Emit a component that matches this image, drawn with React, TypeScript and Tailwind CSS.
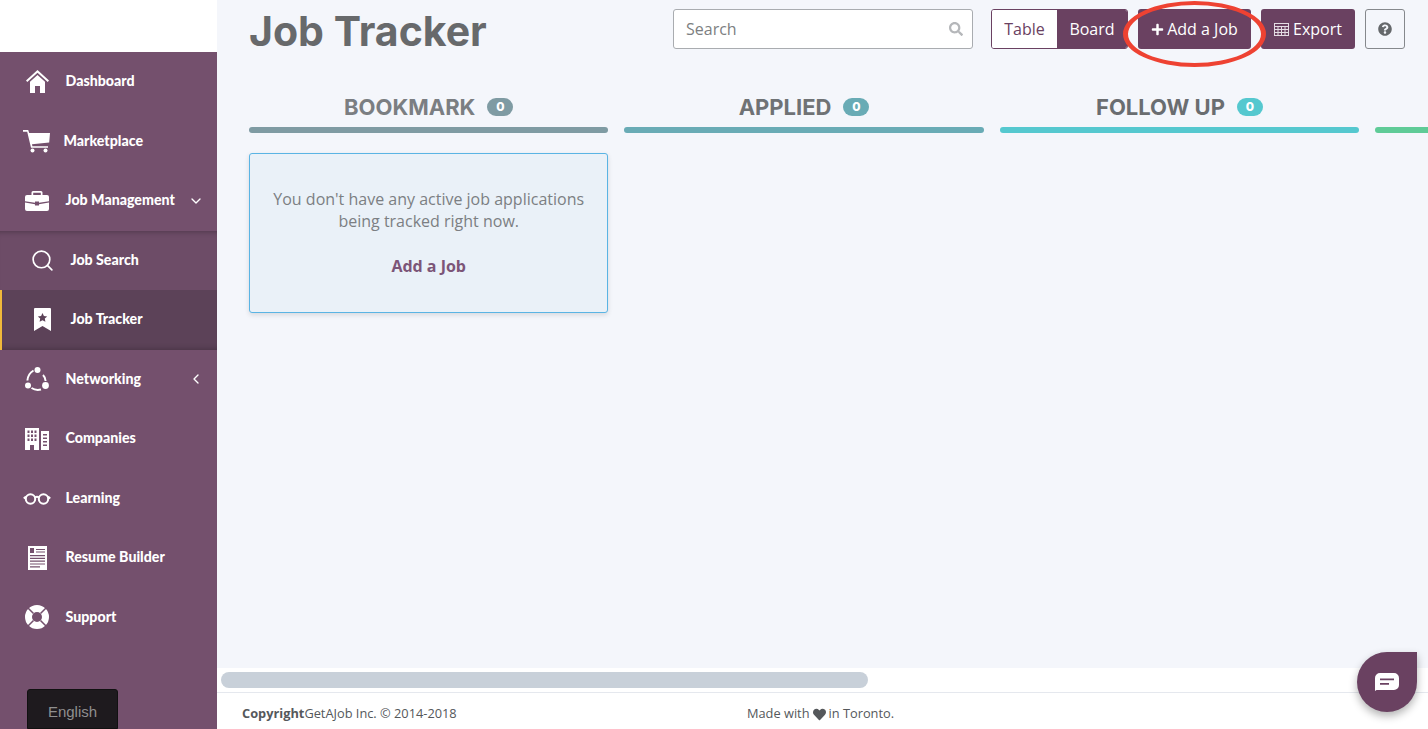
import React from 'react';
import { FaSearch, FaPlus, FaQuestionCircle, FaHeart } from 'react-icons/fa';
import { LuChevronDown, LuChevronLeft, LuSearch } from 'react-icons/lu';

const HomeIcon = () => (
  <svg width="23" height="23" viewBox="0 0 23 23" fill="white">
    <path d="M11.500 0L23 10.500l-1.300 1.500L11.500 2.800 1.300 12 0 10.500z" />
    <path d="M11.500 5L19 11.800V23h-5v-7H9v7H4V11.800z" />
  </svg>
);

const CartIcon = () => (
  <svg width="28" height="23" viewBox="0 0 28 23" fill="white">
    <path d="M0 0h5.200l1 3H27l-.8 9.600L9 14.200l.4 2H25v1.600H8L4.200 1.700H0z" />
    <circle cx="9.500" cy="20.500" r="2" />
    <circle cx="22.500" cy="20.500" r="2" />
  </svg>
);

const BriefcaseIcon = () => (
  <svg width="24" height="20" viewBox="0 0 24 20" fill="white">
    <path d="M8 0h8a1.500 1.500 0 0 1 1.500 1.500V4H22a2 2 0 0 1 2 2v4.200l-10 1.600v-1.300h-4v1.300L0 10.200V6a2 2 0 0 1 2-2h4.500V1.500A1.500 1.500 0 0 1 8 0zm.2 1.700V4h7.600V1.700z" />
    <path d="M0 11.600l10 1.600v1.300h4v-1.300l10-1.600V18a2 2 0 0 1-2 2H2a2 2 0 0 1-2-2z" />
  </svg>
);

const BookmarkIcon = () => (
  <svg width="17" height="23" viewBox="0 0 17 23" fill="white">
    <path fillRule="evenodd" d="M1 0h15a1 1 0 0 1 1 1v22l-8.500-5L0 23V1a1 1 0 0 1 1-1zm7.500 5l1.400 3 3.300.4-2.400 2.200.6 3.200-2.900-1.600-2.900 1.600.6-3.200-2.400-2.200 3.300-.4z" />
  </svg>
);

const NetworkIcon = () => (
  <svg width="24" height="24" viewBox="0 0 24 24" fill="none" stroke="white" strokeWidth="2">
    <circle cx="12.500" cy="3" r="3" fill="white" stroke="none" />
    <circle cx="3" cy="18.500" r="3" fill="white" stroke="none" />
    <circle cx="20.500" cy="18.500" r="3.400" fill="white" stroke="none" />
    <path d="M8.500 3.500C5 5.500 2.800 9 2.400 13.500M6.500 21c3 2 6 2.400 9.500 1.500M18 8c1.600 1.500 2.400 3.500 2.600 6" />
  </svg>
);

const CompaniesIcon = () => (
  <svg width="24" height="22" viewBox="0 0 24 22" fill="white">
    <path fillRule="evenodd" d="M0 0h14v22H9v-5H5v5H0zm2.500 2.500v2.500h2V2.500zm3.500 0v2.500h2V2.500zm3.500 0v2.500h2V2.500zM2.500 6.500v2.500h2V6.500zm3.500 0v2.500h2V6.500zm3.500 0v2.500h2V6.500zM2.500 10.500v2.500h2v-2.500zm3.500 0v2.500h2v-2.500zm3.500 0v2.500h2v-2.500z" />
    <path fillRule="evenodd" d="M16 3h8v19h-8zm2 3v1.500h4V6zm0 3.500V11h4V9.500zm0 3.500v1.500h4V13zm0 3.500V18h4v-1.500z" />
  </svg>
);

const GlassesIcon = () => (
  <svg width="28" height="13" viewBox="0 0 28 13" fill="none" stroke="white" strokeWidth="2">
    <circle cx="7.500" cy="7" r="4.700" />
    <circle cx="20.500" cy="7" r="4.700" />
    <path d="M12 5.500c1.200-1 2.800-1 4 0M3 4.500L.8 6.500M25 4.500l2.200 2" />
  </svg>
);

const ResumeIcon = () => (
  <svg width="19" height="24" viewBox="0 0 19 24" fill="white">
    <path fillRule="evenodd" d="M0 0h19v24H0zm2 2v5h4V2zm6 1v1h9V3zm0 2.500v1h9v-1zM2 9v1.200h15V9zm0 2.800V13h15v-1.200zm0 2.800v1.200h15v-1.200zm0 2.800v1.200h15v-1.200zm0 2.800v1.200h10v-1.200z" />
  </svg>
);

const LifeRingIcon = () => (
  <svg width="24" height="24" viewBox="0 0 24 24" fill="none">
    <circle cx="12" cy="12" r="8.500" stroke="white" strokeWidth="7" />
    <path d="M3 3l5.500 5.500M21 3l-5.500 5.500M3 21l5.500-5.500M21 21l-5.500-5.500" stroke="#74506d" strokeWidth="1.500" />
  </svg>
);

const GridIcon = () => (
  <svg width="15" height="13" viewBox="0 0 15 13" fill="none" stroke="#e4dce3" strokeWidth="1">
    <rect x="0.500" y="0.500" width="14" height="12" />
    <path d="M0 3.500h15M0 6.500h15M0 9.500h15M4 3v10M7.500 3v10M11 3v10" />
  </svg>
);

const ChatIcon = () => (
  <svg width="24" height="18" viewBox="0 0 24 18" fill="white">
    <path fillRule="evenodd" d="M5 0h14a5 5 0 0 1 5 5v7a5 5 0 0 1-5 5H1.500L0 18V5a5 5 0 0 1 5-5zm0 5.500v1.800h14V5.500zm0 4.500v1.800h9V10z" />
  </svg>
);

const navItems = [
  { label: 'Dashboard', icon: <HomeIcon /> },
  { label: 'Marketplace', icon: <CartIcon />, textClass: 'ml-[12.5px]' },
  { label: 'Job Management', icon: <BriefcaseIcon />, chevron: 'down' },
  { label: 'Job Search', icon: <LuSearch className="text-[25px] text-white" strokeWidth={1.6} />, sub: true },
  { label: 'Job Tracker', icon: <BookmarkIcon />, sub: true, active: true },
  { label: 'Networking', icon: <NetworkIcon />, chevron: 'left' },
  { label: 'Companies', icon: <CompaniesIcon /> },
  { label: 'Learning', icon: <GlassesIcon /> },
  { label: 'Resume Builder', icon: <ResumeIcon /> },
  { label: 'Support', icon: <LifeRingIcon /> },
];

const columns = [
  { title: 'BOOKMARK', text: 'text-[#7b7e82]', bar: 'bg-[#7f9ba3]', pill: 'bg-[#7f9ba3]' },
  { title: 'APPLIED', text: 'text-[#6f7275]', bar: 'bg-[#69abb5]', pill: 'bg-[#69abb5]' },
  { title: 'FOLLOW UP', text: 'text-[#6a6d70]', bar: 'bg-[#55c8cf]', pill: 'bg-[#55c8cf]' },
  { title: '', text: '', bar: 'bg-[#5fcb97]', pill: '' },
];

const Sidebar = () => (
  <aside className="w-[217px] shrink-0 flex flex-col font-['Lato',sans-serif]">
    <div className="h-[52px] bg-white shrink-0"></div>
    <div className="flex-1 bg-[#74506d] flex flex-col overflow-hidden">
      {navItems.map((item) => {
        let rowClass = 'pl-[23px]';
        if (item.sub) rowClass = 'pl-[28px] bg-[#6d4c67] shadow-[inset_0_6px_6px_-6px_rgba(0,0,0,0.35)]';
        if (item.active) rowClass = 'pl-[26px] bg-[#5c4258] border-l-2 border-[#f0b93a] shadow-[inset_0_-6px_6px_-6px_rgba(0,0,0,0.3)]';
        return (
          <div key={item.label} className={`h-[59.5px] shrink-0 flex items-center text-white ${rowClass}`}>
            <span className="w-[28px] flex justify-center shrink-0">{item.icon}</span>
            <span className={`text-[14.2px] font-black pb-[2px] ${item.textClass || 'ml-[14.5px]'}`}>{item.label}</span>
            {item.chevron === 'down' && <LuChevronDown className="ml-auto mr-[13px] text-[16px]" />}
            {item.chevron === 'left' && <LuChevronLeft className="ml-auto mr-[13px] text-[16px]" />}
          </div>
        );
      })}
      <div className="mt-auto ml-[27px] w-[91px] h-[40px] pt-[6px] shrink-0 bg-[#1e1a1e] border border-[#111] rounded-t-[3px] flex items-center justify-center text-[15px] text-[#8f8f8f] font-['Liberation_Sans',sans-serif]">
        English
      </div>
    </div>
  </aside>
);

const Toolbar = () => (
  <div className="relative flex items-center font-['Open_Sans',sans-serif] text-[16px]">
    <div className="w-[300px] h-[40px] bg-white border border-[#a9acb0] rounded-[3px] flex items-center justify-between pl-[12px] pr-[9px] text-[#7d7f82]">
      <span>Search</span>
      <FaSearch className="text-[14px] text-[#b5b7ba]" />
    </div>
    <div className="ml-[18px] h-[40px] flex rounded-[3px] overflow-hidden border border-[#6a4161]">
      <span className="w-[65px] bg-white text-[#6a4161] flex items-center justify-center">Table</span>
      <span className="w-[70px] bg-[#6a4161] text-white flex items-center justify-center">Board</span>
    </div>
    <div className="ml-[10px] w-[113px] h-[40px] bg-[#6a4161] text-white rounded-[3px] flex items-center justify-center gap-[3px]">
      <FaPlus className="text-[13px]" />
      <span>Add a Job</span>
    </div>
    <div className="ml-[10px] w-[94px] h-[40px] bg-[#6a4161] text-white rounded-[3px] flex items-center justify-center gap-[4px]">
      <GridIcon />
      <span>Export</span>
    </div>
    <div className="ml-[10px] w-[40px] h-[40px] border border-[#85888c] rounded-[3px] flex items-center justify-center">
      <FaQuestionCircle className="text-[14px] text-[#65686b]" />
    </div>
    {/* hand drawn annotation round the button */}
    <div className="absolute left-[450px] top-[-8px] w-[143px] h-[66px] rounded-[50%] border-x-[5px] border-y-[4px] border-[#ee4232] pointer-events-none"></div>
  </div>
);

const Board = () => (
  <div className="flex-1 overflow-hidden pl-[32px] pt-[39px]">
    <div className="flex gap-[16px] w-[1500px]">
      {columns.map((col, i) => (
        <div key={col.bar} className="w-[359.4px] shrink-0">
          <div className={`h-[30px] flex items-center justify-center gap-[12px] font-['Inter',sans-serif] text-[22px] font-bold ${col.text}`}>
            <span>{col.title}</span>
            {col.title && (
              <span className={`w-[26px] h-[18px] rounded-[9px] flex items-center justify-center text-white text-[12px] font-extrabold ${col.pill}`}>0</span>
            )}
          </div>
          <div className={`mt-[5px] h-[6px] rounded-full ${col.bar}`}></div>
          {i === 0 && (
            <div className="mt-[20px] h-[160px] bg-[#eaf1f8] border border-[#5ab4e4] rounded-[3px] shadow-[0_2px_5px_rgba(0,0,0,0.12)] flex flex-col items-center pt-[34px] font-['Open_Sans',sans-serif] text-[16px] leading-[22px] text-[#7c7f83] text-center">
              <p>You don't have any active job applications<br />being tracked right now.</p>
              <p className="mt-[23px] font-bold text-[#7c5578]">Add a Job</p>
            </div>
          )}
        </div>
      ))}
    </div>
  </div>
);

const Footer = () => (
  <div className="bg-white h-[61px] shrink-0">
    <div className="h-[25px] pt-[4px] pl-[4px] border-b border-[#e5e8ee]">
      <div className="w-[647px] h-[16px] rounded-full bg-[#c8d0d9]"></div>
    </div>
    <div className="flex items-center h-[36px] pt-[6px] pl-[25px] font-['Open_Sans',sans-serif] text-[12.8px] text-[#55585b]">
      <span className="w-[505px]"><strong className="font-bold">Copyright</strong>GetAJob Inc. © 2014-2018</span>
      <span className="flex items-center gap-[3px]">Made with <FaHeart className="text-[13px]" /> in Toronto.</span>
    </div>
  </div>
);

export default function App() {
  return (
    <div className="relative flex h-[729px] w-[1428px] overflow-hidden bg-[#f4f6fb]">
      <Sidebar />
      <main className="flex-1 min-w-0 flex flex-col">
        <div className="flex items-start justify-between pl-[32px] pr-[23px] pt-[9px]">
          <h1 className="font-['Inter',sans-serif] text-[41px] leading-[44px] font-bold text-[#67696b]">Job Tracker</h1>
          <Toolbar />
        </div>
        <Board />
        <Footer />
      </main>
      <div className="absolute left-[1357px] top-[652px] w-[60px] h-[60px] bg-[#6a4161] rounded-full rounded-tr-[8px] shadow-[0_4px_8px_rgba(0,0,0,0.3)] flex items-center justify-center">
        <ChatIcon />
      </div>
    </div>
  );
}
